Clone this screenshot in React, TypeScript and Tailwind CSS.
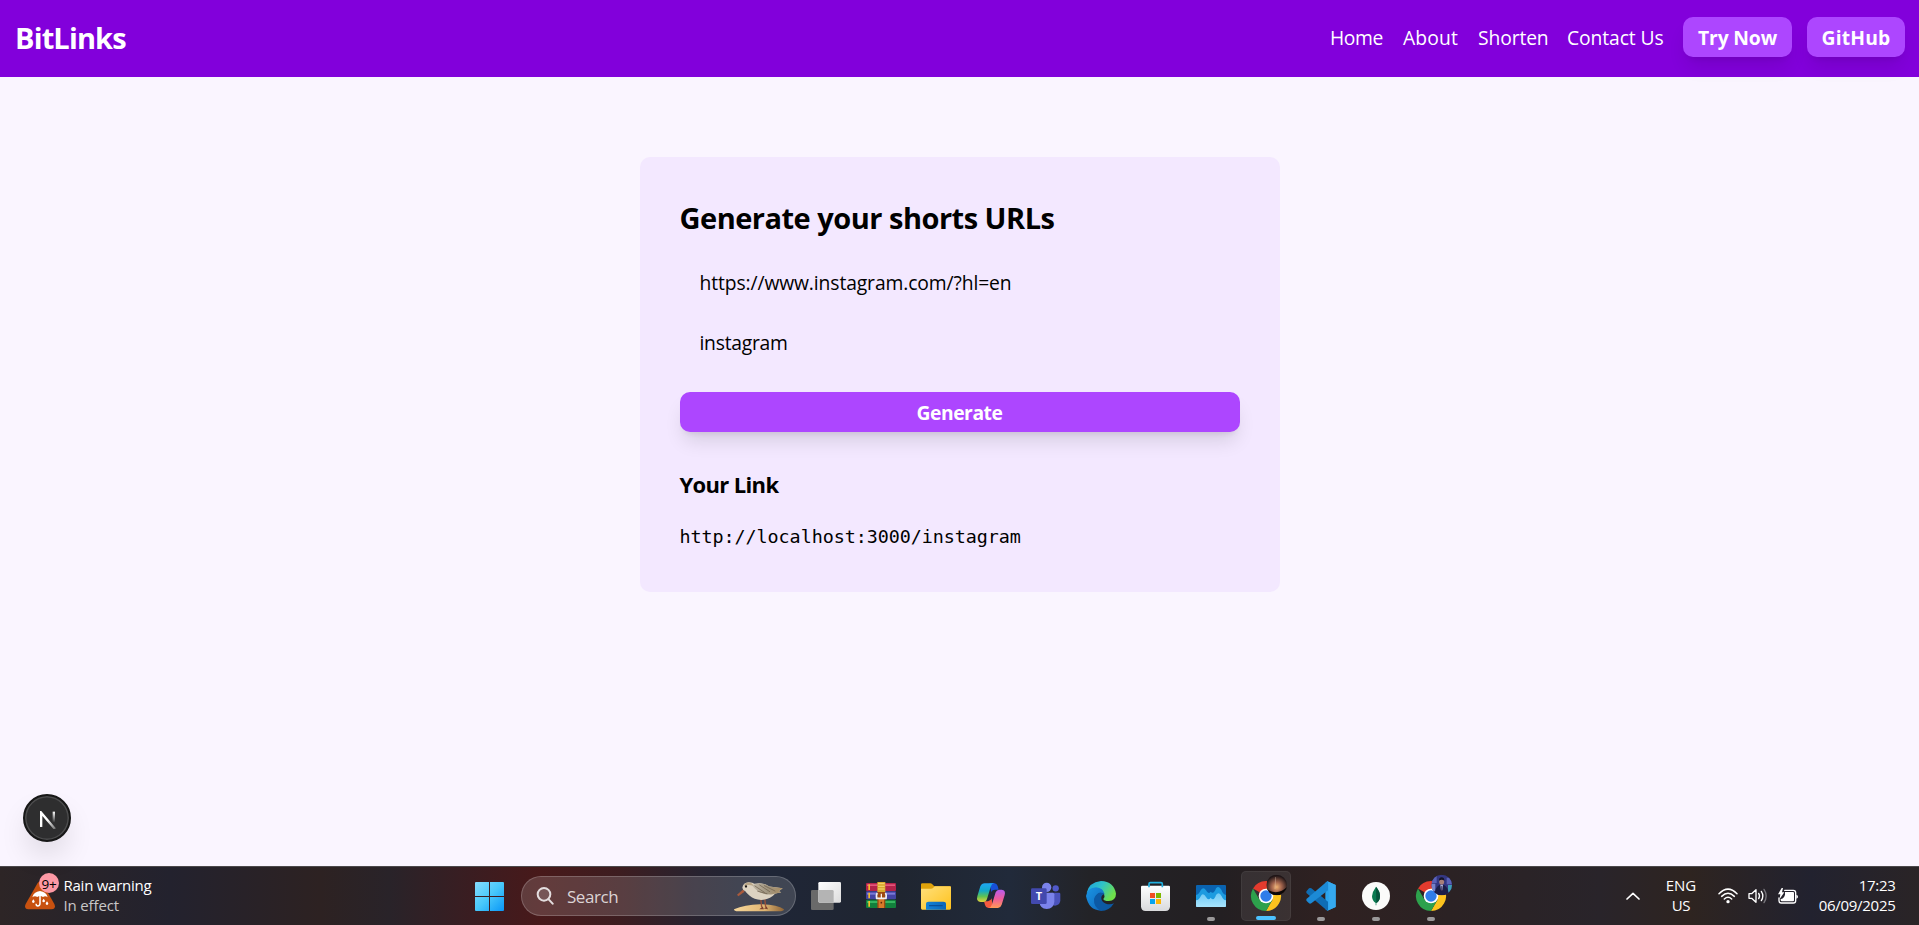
import { useState, type ReactNode } from 'react';

function Icon({ children, className = '' }: { children: ReactNode; className?: string }) {
  return (
    <svg viewBox="0 0 90 90" className={`size-[30px] overflow-visible ${className}`} aria-hidden="true">
      {children}
    </svg>
  );
}

function WeatherIcon() {
  return (
    <svg viewBox="0 0 90 90" className="size-[30px]" aria-hidden="true">
      <path d="M38 9Q45 -1 52 9L88 72Q94 86 80 88H10Q-4 86 2 72Z" fill="#c8510f" />
      <path d="M22 52Q26 35 45 33Q64 35 68 52Q61 46 54 51Q45 45 37 51Q29 46 22 52Z" fill="#fff" />
      <path d="M45 46V70Q45 78 38 78Q33 77 33 71" fill="none" stroke="#fff" strokeWidth="4.5" />
      <path d="M25 58l4 6q0 5-4 5t-4-5zM56 56l4 6q0 5-4 5t-4-5zM66 64l4 6q0 5-4 5t-4-5z" fill="#fff" />
    </svg>
  );
}

function WindowsIcon() {
  return (
    <svg viewBox="0 0 87 87" className="size-[29px]" aria-hidden="true">
      <defs>
        <linearGradient id="win" x1="0" y1="0" x2="87" y2="87" gradientUnits="userSpaceOnUse">
          <stop stopColor="#86dcfd" />
          <stop offset=".5" stopColor="#48c8fa" />
          <stop offset="1" stopColor="#0a97f7" />
        </linearGradient>
      </defs>
      <path
        d="M3 0H42V42H0V3Q0 0 3 0ZM45 0H84Q87 0 87 3V42H45ZM0 45H42V87H3Q0 87 0 84ZM45 45H87V84Q87 87 84 87H45Z"
        fill="url(#win)"
      />
    </svg>
  );
}

function BirdIcon() {
  return (
    <svg viewBox="0 0 150 92" className="h-[31px] w-[50px]" aria-hidden="true">
      <defs>
        <linearGradient id="sand" x1="0" x2="1">
          <stop stopColor="#f6d79b" />
          <stop offset=".6" stopColor="#e0b673" />
          <stop offset="1" stopColor="#8d6437" />
        </linearGradient>
        <linearGradient id="wing" x1="0" x2="1">
          <stop stopColor="#c2b9a8" />
          <stop offset=".5" stopColor="#a0957f" />
          <stop offset="1" stopColor="#a98d62" />
        </linearGradient>
      </defs>
      <path d="M0 84Q32 70 78 69Q130 70 150 84Q150 91 130 90H20Q0 92 0 84Z" fill="url(#sand)" />
      <path d="M27 25L9 41L13 45L32 32Z" fill="#a95a3c" />
      <path d="M80 50L83 78M92 50L95 78" stroke="#9a5139" strokeWidth="4" />
      <path d="M76 84l10-8 4 8zM90 82l8-6 4 8z" fill="#7d3f2c" />
      <path d="M25 20Q27 4 44 3Q57 4 61 8Q86 2 106 16L146 21L134 30L142 33L124 37Q110 53 88 56Q62 58 47 44Q38 36 34 30Q26 28 25 20Z" fill="#ddd3c1" />
      <path d="M54 12Q84 0 106 16L146 21L134 30L142 33L112 40Q75 42 54 12Z" fill="url(#wing)" />
      <path d="M62 14L92 34M76 11L108 32M90 13L124 30M70 30L100 38" stroke="#6a5b47" strokeWidth="2" />
      <path d="M29 14Q34 2 48 4Q57 7 58 14Q44 9 29 14Z" fill="#b9a687" />
      <circle cx="36" cy="16" r="3.5" fill="#1d1916" />
    </svg>
  );
}

function TaskViewIcon() {
  return (
    <Icon>
      <defs>
        <linearGradient id="tv" x1="0" y1="0" x2="1" y2="1">
          <stop stopColor="#fff" />
          <stop offset="1" stopColor="#dcdcdc" />
        </linearGradient>
      </defs>
      <rect y="27" width="68" height="60" rx="4" fill="#6a6a6a" />
      <rect x="22" y="3" width="68" height="62" rx="4" fill="url(#tv)" />
      <path d="M22 27H64Q68 27 68 31V65H26Q22 65 22 61Z" fill="#b4b4b4" />
    </Icon>
  );
}

function ArchiveIcon() {
  return (
    <Icon>
      <rect y="6" width="90" height="24" rx="3" fill="#b3234a" />
      <path d="M3 10H87V15H3Z" fill="#e4577c" />
      <rect y="31" width="90" height="24" rx="3" fill="#4444a4" />
      <path d="M3 35H87V41H3Z" fill="#7a7ad6" />
      <rect y="56" width="90" height="25" rx="3" fill="#12803c" />
      <path d="M3 60H87V66H3Z" fill="#35b560" />
      <path d="M7 10H12V27H7ZM7 35H12V52H7ZM7 60H12V77H7Z" fill="#f6bd2c" />
      <rect x="34" y="3" width="24" height="30" fill="#d8a92d" />
      <path d="M36 8H56M36 16H56M36 24H56" stroke="#f5d774" strokeWidth="3" />
      <rect x="34" y="33" width="24" height="48" fill="#9c4a10" />
      <rect x="38" y="52" width="16" height="29" fill="#d6792a" />
      <path d="M34 36Q30 40 32 52H60Q62 40 58 36" fill="none" stroke="#f0f0f0" strokeWidth="5" />
      <path d="M46 38V52" stroke="#fff" strokeWidth="3.5" />
      <circle cx="46" cy="65" r="2.5" fill="#5a2a0a" />
    </Icon>
  );
}

function FolderIcon() {
  return (
    <Icon>
      <defs>
        <linearGradient id="fold" x1="0" y1="0" x2="1" y2="1">
          <stop stopColor="#ffe07c" />
          <stop offset="1" stopColor="#ffc21c" />
        </linearGradient>
        <linearGradient id="foldTag" x1="0" x2="1">
          <stop stopColor="#1483d8" />
          <stop offset="1" stopColor="#0b66b8" />
        </linearGradient>
      </defs>
      <path d="M0 10Q0 7 4 7H28Q31 7 34 10L40 16H86Q90 16 90 20V40H0Z" fill="#e0a30b" />
      <path d="M0 23H30Q34 23 37 20L41 16H87Q90 16 90 19V82Q90 86 86 86H4Q0 86 0 82Z" fill="url(#fold)" />
      <path d="M15 86V69Q15 62 23 62H67Q75 62 75 69V86Z" fill="url(#foldTag)" />
      <path d="M24 74H65" stroke="#0a4c94" strokeWidth="3.5" />
    </Icon>
  );
}

function CopilotIcon() {
  return (
    <Icon>
      <defs>
        <linearGradient id="cpA" x1="0" y1="0" x2="0" y2="1">
          <stop stopColor="#1fa6f2" />
          <stop offset=".4" stopColor="#12a9c9" />
          <stop offset=".7" stopColor="#5ec254" />
          <stop offset="1" stopColor="#e6d33a" />
        </linearGradient>
        <linearGradient id="cpB" x1="0" y1="0" x2="0" y2="1">
          <stop stopColor="#b65cf0" />
          <stop offset=".5" stopColor="#ee5c9b" />
          <stop offset="1" stopColor="#ff9a55" />
        </linearGradient>
      </defs>
      <path d="M40 6H54Q63 7 65 15L68 26H57Q48 26 46 33Z" fill="#1750d8" />
      <path d="M50 81H37Q29 80 27 72L24 61H36Q44 60 47 52Z" fill="#f5593f" />
      <path d="M26 7H54Q47 8 44 18L33 54Q30 63 22 63H14Q0 62 4 46L13 16Q17 7 26 7Z" fill="url(#cpA)" />
      <path d="M66 81H38Q45 80 48 70L59 34Q62 26 70 26H77Q90 27 86 42L77 71Q74 80 66 81Z" fill="url(#cpB)" />
    </Icon>
  );
}

function TeamsIcon() {
  return (
    <Icon>
      <circle cx="74" cy="22" r="9.5" fill="#5059c9" />
      <path d="M62 35H84Q88 35 88 39V58Q88 73 72 74Q62 74 58 66Z" fill="#4b53bc" />
      <circle cx="47" cy="19" r="14" fill="#7b83eb" />
      <path d="M28 35H64Q70 35 70 40V62Q68 83 47 84Q27 83 25 62V40Z" fill="#7b83eb" />
      <rect x="0" y="22" width="47" height="47" rx="4" fill="#4249ae" />
      <text x="23.5" y="57" textAnchor="middle" fontSize="33" fontWeight="700" fill="#fff" fontFamily="Open Sans, sans-serif">
        T
      </text>
    </Icon>
  );
}

function EdgeIcon() {
  return (
    <Icon>
      <defs>
        <linearGradient id="edTop" x1="0" y1="0" x2="1" y2=".5">
          <stop stopColor="#1c9fe0" />
          <stop offset=".5" stopColor="#2fc3c8" />
          <stop offset="1" stopColor="#6fe04a" />
        </linearGradient>
        <linearGradient id="edLow" x1="0" y1="0" x2="1" y2="1">
          <stop stopColor="#1a96e4" />
          <stop offset="1" stopColor="#0f64b8" />
        </linearGradient>
      </defs>
      <path d="M2 36Q8 4 45 0Q84 2 90 38Q90 58 68 60Q54 60 52 54Q58 47 54 38Q46 22 24 26Q8 28 2 36Z" fill="url(#edTop)" />
      <path d="M0 45Q4 20 30 19Q52 21 56 40Q40 30 30 45Q22 68 45 89Q8 88 0 45Z" fill="url(#edLow)" />
      <path d="M40 35Q28 40 24 54Q22 78 45 90Q70 90 84 67Q72 72 60 68Q44 62 46 48Q48 42 54 40Q50 33 40 35Z" fill="#0c59a4" />
    </Icon>
  );
}

function StoreIcon() {
  return (
    <Icon>
      <defs>
        <linearGradient id="bag" x1="0" y1="0" x2="0" y2="1">
          <stop stopColor="#fff" />
          <stop offset="1" stopColor="#d9dadc" />
        </linearGradient>
      </defs>
      <path d="M0 18Q0 14 4 14H83Q87 14 87 18V76Q87 90 73 90H14Q0 90 0 76Z" fill="url(#bag)" />
      <path d="M24 19V9Q24 5 28 5H60Q64 5 64 9V19" fill="none" stroke="#22b1e0" strokeWidth="5" />
      <path d="M27 36H42V51H27Z" fill="#f04e23" />
      <path d="M45 36H60V51H45Z" fill="#7db700" />
      <path d="M27 54H42V69H27Z" fill="#05a4ee" />
      <path d="M45 54H60V69H45Z" fill="#fdb606" />
    </Icon>
  );
}

function TaskManagerIcon() {
  return (
    <Icon>
      <defs>
        <linearGradient id="tmLow" x1="0" y1="0" x2="0" y2="1">
          <stop stopColor="#6fc9f5" />
          <stop offset="1" stopColor="#a8e4fd" />
        </linearGradient>
      </defs>
      <rect y="12" width="90" height="66" rx="3" fill="#0a63b0" />
      <path d="M0 42Q9 40 14 28Q22 16 30 28Q37 42 44 32Q53 42 60 22Q68 12 76 26Q81 40 90 42V75Q90 78 87 78H3Q0 78 0 75Z" fill="#1c9be0" />
      <path d="M0 58Q10 56 15 44Q22 34 30 48Q37 60 44 50Q54 62 60 42Q69 30 77 46Q82 58 90 58V75Q90 78 87 78H3Q0 78 0 75Z" fill="url(#tmLow)" />
    </Icon>
  );
}

function ChromeIcon({ avatar }: { avatar: 'sunset' | 'person' }) {
  return (
    <Icon>
      <defs>
        <clipPath id={`clip-${avatar}`}>
          <circle cx="77" cy="12" r="31" />
        </clipPath>
        <radialGradient id="sky" cx=".5" cy=".6" r=".55">
          <stop stopColor="#f0b070" />
          <stop offset=".45" stopColor="#a0624c" />
          <stop offset="1" stopColor="#1e1416" />
        </radialGradient>
      </defs>
      <path d="M45 45L6 22.5A45 45 0 0 1 84 22.5Z" fill="#e33b2e" />
      <path d="M45 22.5H84A45 45 0 0 1 45 90L64.5 56.25Z" fill="#fcc31e" />
      <path d="M6 22.5L25.5 56.25L64.5 56.25L45 90A45 45 0 0 1 6 22.5Z" fill="#2da14c" />
      <circle cx="45" cy="45" r="22" fill="#fff" />
      <circle cx="45" cy="45" r="17" fill="#2f7de9" />
      {avatar === 'sunset' ? (
        <g clipPath="url(#clip-sunset)">
          <rect x="46" y="-19" width="62" height="62" fill="url(#sky)" />
          <path d="M74 -12L72 24" stroke="#f0d8c0" strokeWidth="2" opacity=".5" />
          <path d="M46 22Q54 32 74 34Q94 32 108 18V43H46Z" fill="#0b0707" />
        </g>
      ) : (
        <g clipPath="url(#clip-person)">
          <rect x="46" y="-19" width="62" height="62" fill="#343782" />
          <path d="M46 -19H62V6H46ZM92 -10H108V10H92Z" fill="#5a62b8" />
          <path d="M96 12H108V34H96Z" fill="#3e9fb6" />
          <path d="M46 8H58V30H46Z" fill="#7682c8" />
          <ellipse cx="77" cy="2" rx="7.5" ry="9" fill="#a87f78" />
          <path d="M69 -1Q69 -11 77 -11Q85 -11 85 -1Q77 -6 69 -1Z" fill="#15142a" />
          <path d="M56 43Q57 18 70 12H84Q97 18 98 43Z" fill="#1a1e48" />
          <path d="M73 12H81L79 28H75Z" fill="#aab2dc" />
          <path d="M76 15H78.5L79 30H75.5Z" fill="#3c2b52" />
        </g>
      )}
    </Icon>
  );
}

function CodeIcon() {
  return (
    <Icon>
      <path d="M64 1L89 12V78L64 89L58 84V6Z" fill="#2aa4ee" />
      <path d="M2 30L9 22Q12 20 16 22L66 62V89L62 88L2 37Q-1 33 2 30Z" fill="#0f6db4" />
      <path d="M2 60L9 67Q12 69 16 67L66 28V1L62 2L2 53Q-1 57 2 60Z" fill="#1c8ad6" />
      <path d="M64 1L89 12V78L64 89Q68 87 68 82V8Q68 3 64 1Z" fill="#35a9ef" />
    </Icon>
  );
}

function LeafIcon() {
  return (
    <Icon>
      <circle cx="45" cy="45" r="42" fill="#fbfbfa" />
      <path d="M45 17Q58 32 57 47Q56 60 46 66V73H44V66Q33 59 33 46Q34 32 45 17Z" fill="#0a7a50" />
      <path d="M45 17Q58 32 57 47Q56 60 46 66Z" fill="#06543c" />
    </Icon>
  );
}

const apps = [
  { name: 'view', icon: <TaskViewIcon />, mark: '' },
  { name: 'archive', icon: <ArchiveIcon />, mark: '' },
  { name: 'files', icon: <FolderIcon />, mark: '' },
  { name: 'copilot', icon: <CopilotIcon />, mark: '' },
  { name: 'teams', icon: <TeamsIcon />, mark: '' },
  { name: 'edge', icon: <EdgeIcon />, mark: '' },
  { name: 'store', icon: <StoreIcon />, mark: '' },
  { name: 'manager', icon: <TaskManagerIcon />, mark: 'w-2 bg-[#9a9899]' },
  { name: 'chrome', icon: <ChromeIcon avatar="sunset" />, mark: 'w-5 bg-[#4cc2ff]' },
  { name: 'code', icon: <CodeIcon />, mark: 'w-2 bg-[#9a9899]' },
  { name: 'leaf', icon: <LeafIcon />, mark: 'w-2 bg-[#9a9899]' },
  { name: 'chrome-2', icon: <ChromeIcon avatar="person" />, mark: 'w-2 bg-[#9a9899]' },
];

function Navbar() {
  const button =
    'flex h-10 items-center justify-center rounded-[10px] bg-[#ad46ff] pt-0.5 font-bold shadow-[0_12.5px_19px_-4px_rgba(0,0,0,0.1),0_5px_7.5px_-5px_rgba(0,0,0,0.1)]';
  return (
    <nav className="flex h-[77px] items-center justify-between bg-[#8200db] pr-3.5 pb-[3px] pl-[15px] text-[19.3px] text-white">
      <div className="pt-px text-[29px] leading-none font-bold tracking-[-0.85px]">BitLinks</div>
      <ul className="flex items-center">
        <li className="w-[73px] pt-0.5 tracking-[-0.4px]">Home</li>
        <li className="w-[75px] pt-0.5 tracking-[0.15px]">About</li>
        <li className="w-[89px] pt-0.5 tracking-[-0.12px]">Shorten</li>
        <li className="w-[116px] pt-0.5 tracking-[-0.1px]">Contact Us</li>
        <li className="flex gap-[15px]">
          <button className={`${button} w-[109px] tracking-[-0.15px]`}>Try Now</button>
          <button className={`${button} w-[98px] tracking-[0.2px]`}>GitHub</button>
        </li>
      </ul>
    </nav>
  );
}

function ShortenCard() {
  const [url, setUrl] = useState('https://www.instagram.com/?hl=en');
  const [slug, setSlug] = useState('instagram');
  return (
    <section className="mx-auto mt-20 flex h-[435px] w-[640px] flex-col rounded-[10px] bg-[#f3e8ff] px-10 pt-[38px] text-black">
      <h1 className="h-[45px] text-[29px] leading-[45px] font-bold tracking-[-0.5px]">Generate your shorts URLs</h1>
      <input
        className="mt-[23px] h-10 px-5 text-[19.3px] leading-10 tracking-[-0.11px] outline-none"
        value={url}
        onChange={(e) => setUrl(e.target.value)}
      />
      <input
        className="mt-5 h-10 px-5 text-[19.3px] leading-10 tracking-[-0.25px] outline-none"
        value={slug}
        onChange={(e) => setSlug(e.target.value)}
      />
      <button className="mt-[29px] h-10 rounded-[10px] bg-[#ad46ff] pt-0.5 text-[19.3px] leading-none font-bold tracking-[-0.45px] text-white shadow-[0_12.5px_19px_-4px_rgba(0,0,0,0.12),0_5px_7.5px_-5px_rgba(0,0,0,0.12)]">
        Generate
      </button>
      <h2 className="mt-[37px] h-[30px] text-[22px] leading-[30px] font-bold tracking-[-0.65px]">Your Link</h2>
      <code className="mt-[23px] font-['DejaVu_Sans_Mono',monospace] text-[18.4px] leading-[30px] tracking-[-0.06px]">
        http://localhost:3000/instagram
      </code>
    </section>
  );
}

function DevBadge() {
  return (
    <div className="absolute top-[794px] left-[23px] flex size-12 items-center justify-center rounded-full border-2 border-[#171717] bg-[#2e2e2f] shadow-[0_16px_32px_-8px_rgba(0,0,0,0.2),inset_0_0_0_1.5px_#4c4c4d]">
      <svg viewBox="0 0 48 54" className="mt-[3px] ml-px h-[18px] w-4" fill="none" aria-hidden="true">
        <defs>
          <linearGradient id="nDiag" x1="24" y1="26" x2="47" y2="54" gradientUnits="userSpaceOnUse">
            <stop stopColor="#fff" />
            <stop offset="1" stopColor="#fff" stopOpacity=".3" />
          </linearGradient>
          <linearGradient id="nStem" x1="0" y1="0" x2="0" y2="1">
            <stop stopColor="#fff" />
            <stop offset="1" stopColor="#fff" stopOpacity="0" />
          </linearGradient>
        </defs>
        <path d="M3.500 48V5L45 54" stroke="url(#nDiag)" strokeWidth="7" />
        <rect x="38" y="2" width="7" height="33" fill="url(#nStem)" />
      </svg>
    </div>
  );
}

function Taskbar() {
  return (
    <footer className="flex h-[59px] items-center border-t border-[#4b484b] bg-[linear-gradient(90deg,#2d2526_0px,#23222e_170px,#2d2222_320px,#292329_390px,#3a1d21_470px,#48191a_540px,#3d1d20_620px,#272330_700px,#1f2637_760px,#1f2530_900px,#212a3a_1010px,#232327_1090px,#231f22_1220px,#2f2121_1330px,#2b2224_1450px,#29242a_1600px,#2e2420_1690px,#22222f_1810px,#2a2426_1919px)] text-[15px] leading-5 text-white">
      <div className="flex w-[475px] items-center pl-[25px]">
        <div className="relative mt-[-2px] size-[30px]">
          <WeatherIcon />
          <span className="absolute -top-[7px] left-[14px] flex size-[20px] items-center justify-center rounded-full bg-[#fd99a5] pt-px text-[13.5px] tracking-[-0.3px] text-black">
            9+
          </span>
        </div>
        <div className="pb-0.5 pl-[8.5px]">
          <p className="tracking-[-0.25px]">Rain warning</p>
          <p className="tracking-[-0.15px] text-[#c9c7c8]">In effect</p>
        </div>
      </div>
      <WindowsIcon />
      <div className="ml-[17px] flex h-10 w-[275px] items-center rounded-full border border-white/20 bg-white/15 pr-[11px] pl-[14px]">
        <svg viewBox="0 0 54 54" className="size-[18px]" fill="none" stroke="#e4dedf" strokeWidth="6" strokeLinecap="round" aria-hidden="true">
          <circle cx="24" cy="22" r="19" fill="#ffffff22" />
          <path d="M38 37L50 50" />
        </svg>
        <span className="grow pt-px pl-[13px] text-[17px] tracking-[-0.45px] text-[#dcd4d5]">Search</span>
        <BirdIcon />
      </div>
      <div className="ml-[2.5px] flex">
        {apps.map(({ name, icon, mark }) => (
          <div key={name} className="flex w-[55px] justify-center">
            <div
              className={
                name === 'chrome'
                  ? 'relative flex size-[50px] items-center justify-center rounded-[5px] border border-white/5 bg-white/8'
                  : 'relative flex size-[50px] items-center justify-center'
              }
            >
              {icon}
              {mark && <span className={`absolute bottom-0 h-1 rounded-full ${mark}`} />}
            </div>
          </div>
        ))}
      </div>
      <div className="flex grow items-center justify-end pr-[23.5px]">
        <svg viewBox="0 0 42 24" className="h-2 w-3.5" fill="none" stroke="#fff" strokeWidth="5" strokeLinecap="round" strokeLinejoin="round" aria-hidden="true">
          <path d="M3 21L21 4L39 21" />
        </svg>
        <div className="ml-[21px] w-10 pb-0.5 text-center">
          <p>ENG</p>
          <p className="tracking-[-0.4px]">US</p>
        </div>
        <svg viewBox="0 0 60 48" className="ml-[17px] h-4 w-5" fill="none" stroke="#fff" strokeWidth="4.5" strokeLinecap="round" aria-hidden="true">
          <path d="M3 17Q30 -10 57 17M11 25Q30 7 49 25M19 33Q30 23 41 33" />
          <circle cx="30" cy="41" r="5" fill="#fff" stroke="none" />
        </svg>
        <svg viewBox="0 0 60 48" className="ml-[9.5px] h-4 w-5" fill="none" stroke="#fff" strokeWidth="4" strokeLinecap="round" strokeLinejoin="round" aria-hidden="true">
          <path d="M3 17H11L24 5V43L11 31H3Z" />
          <path d="M32 16Q37 24 32 32M40 10Q49 24 40 38" />
          <path d="M48 4Q61 24 48 44" stroke="#77757b" />
        </svg>
        <svg viewBox="0 0 60 48" className="ml-[10px] h-4 w-5" aria-hidden="true">
          <path d="M20 7H46Q53 7 53 14V38Q53 45 46 45H10Q3 45 3 38V30" fill="none" stroke="#fff" strokeWidth="4" strokeLinecap="round" />
          <path d="M21 12H45Q48 12 48 15V37Q48 40 45 40H12Q8 40 8 36V33Q18 32 21 20Z" fill="#fff" />
          <path d="M55 20Q60 21 60 26T55 32Z" fill="#fff" />
          <path d="M11 0L0 19H7L5 33L19 13H12L15 0Z" fill="#fff" />
        </svg>
        <div className="w-[98px] pb-0.5 text-right">
          <p className="tracking-[-0.29px]">17:23</p>
          <p className="tracking-[-0.28px]">06/09/2025</p>
        </div>
      </div>
    </footer>
  );
}

export default function App() {
  return (
    <div className="relative flex h-[925px] w-[1919px] flex-col overflow-hidden bg-[#faf5ff] font-['Open_Sans','Noto_Sans',sans-serif]">
      <Navbar />
      <main className="grow">
        <ShortenCard />
      </main>
      <DevBadge />
      <Taskbar />
    </div>
  );
}
